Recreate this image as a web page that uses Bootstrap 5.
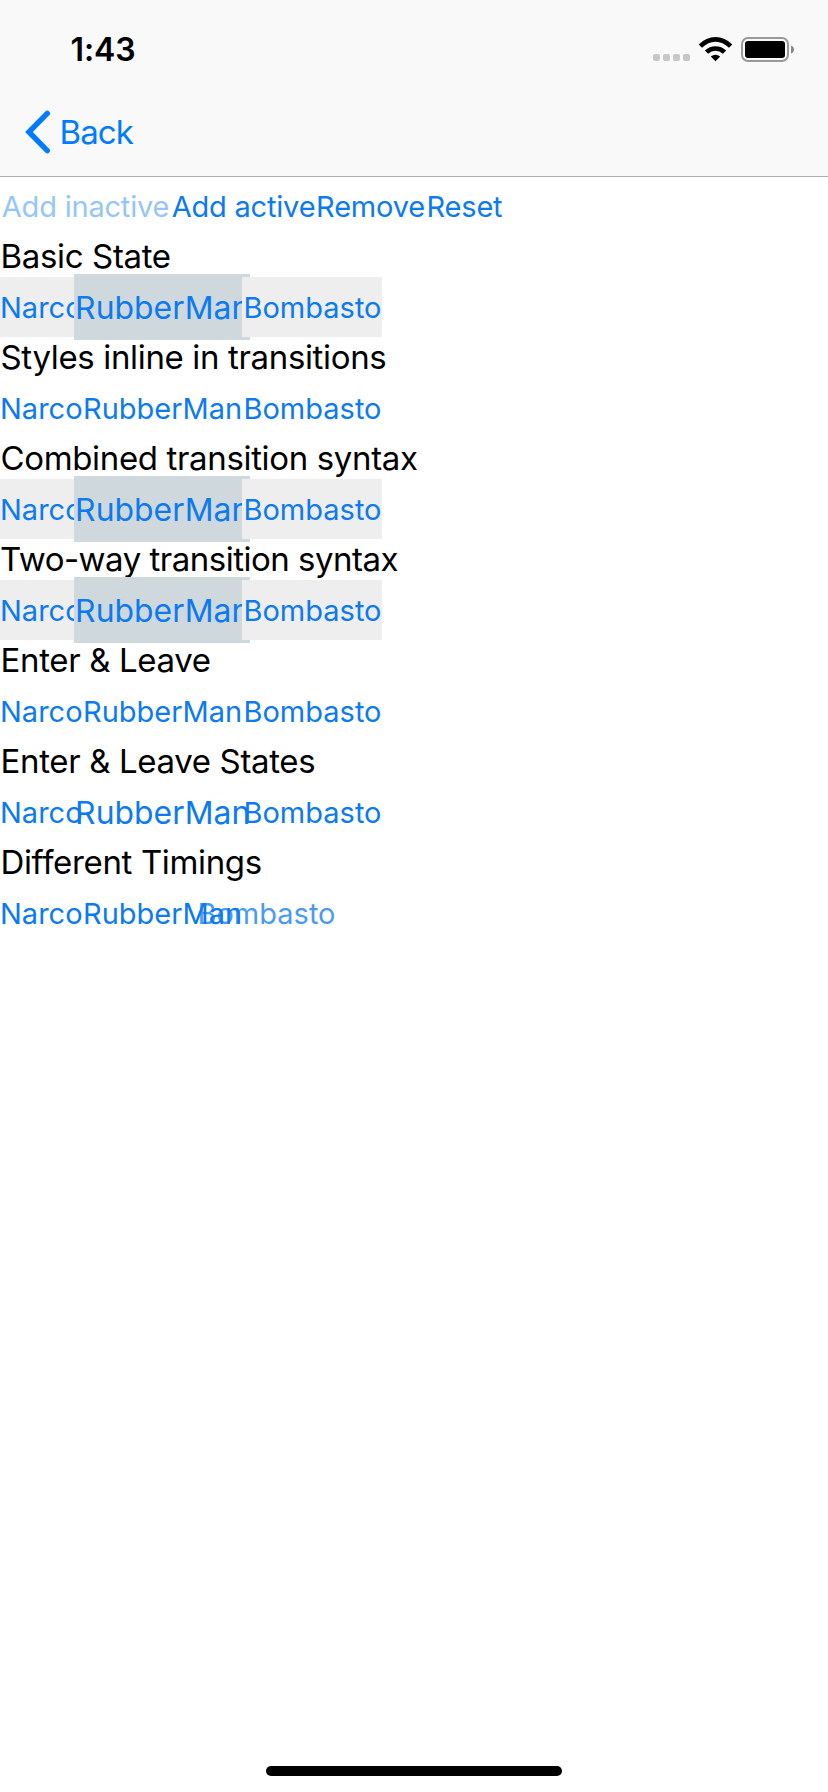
<!DOCTYPE html>
<html lang="en">
<head>
<meta charset="utf-8">
<meta name="viewport" content="width=device-width, initial-scale=1">
<title>Hero animations</title>
<link href="https://cdn.jsdelivr.net/npm/bootstrap@5.3.0/dist/css/bootstrap.min.css" rel="stylesheet">
<style>
  body { font-family: Inter, "Liberation Sans", sans-serif; color: #000; background: #fff; }
  .screen { height: 1792px; overflow: hidden; }
  .top-area { height: 177px; background: #f9f9f9; border-bottom: 1px solid #acacac; }
  .status-bar { height: 88px; padding: 10px 34px 0 70.5px; }
  .clock { font-size: 32px; font-weight: 600; line-height: 1; letter-spacing: -.1px; margin-top: 2px; }
  .back-bar { height: 88px; padding-left: 25px; color: #007aff; }
  .back-label { font-size: 33px; line-height: 1; letter-spacing: -.9px; margin-left: 8.5px; }
  .btn-plain { --bs-btn-color: #0c7af0; --bs-btn-font-size: 29px; --bs-btn-line-height: 1;
    --bs-btn-padding-x: 0; --bs-btn-padding-y: 0; --bs-btn-border-width: 0; --bs-btn-border-radius: 0;
    --bs-btn-disabled-color: #96c6f8; --bs-btn-disabled-opacity: 1;
    height: 60px; white-space: nowrap; }
  .toolbar { height: 59px; }
  .toolbar .btn-plain { height: 59px; letter-spacing: -.2px; }
  .w-add-in { width: 171px; } .w-add-act { width: 145px; } .w-remove { width: 109px; } .w-reset { width: 79px; }
  .section-title { height: 41px; line-height: 41px; font-size: 33px; font-weight: 400; letter-spacing: -.35px; margin: 0; padding-left: .5px; white-space: nowrap; }
  .title-tight { letter-spacing: -.5px; padding-left: 0; }
  .hero-a { width: 82px; } .hero-b { width: 160px; } .hero-c { width: 140px; }
  .filled .btn-plain { background: #eee; }
  .filled .hero-active { background: #cfd8dc; }
  .hero-active { transform: scale(1.1); }
  .heroes .hero-b { padding-left: 1px; }
  .heroes .hero-c { position: relative; padding-left: 1px; }
  .sliding { transform: translateX(-46px); opacity: .75; }
  .home-bar { width: 296px; height: 10px; border-radius: 5px; background: #000; margin-bottom: 16px; }
</style>
</head>
<body>
<div class="screen d-flex flex-column">
  <header class="top-area flex-shrink-0">
    <div class="status-bar d-flex align-items-center justify-content-between">
      <span class="clock">1:43</span>
      <svg width="142" height="26" viewBox="652 36 142 26" aria-hidden="true">
        <g fill="#c7c7c7">
          <rect x="653" y="54" width="7" height="7" rx="2"/><rect x="663" y="54" width="7" height="7" rx="2"/>
          <rect x="673" y="54" width="7" height="7" rx="2"/><rect x="683" y="54" width="7" height="7" rx="2"/>
        </g>
        <g fill="none" stroke="#000" stroke-width="4.6">
          <path d="M700.4 46.2Q707 39.4 715.5 39.4T730.6 46.2"/>
          <path d="M706.5 52.2Q710.3 48.5 715.5 48.5T724.5 52.2"/>
        </g>
        <path d="M710.8 56.6Q715.5 53 720.2 56.6L715.5 61.2Z"/>
        <rect x="742" y="38" width="46" height="23" rx="6" fill="none" stroke="#999" stroke-width="2"/>
        <rect x="745" y="41" width="40" height="17" rx="3"/>
        <path d="M791 45.5Q794 46.5 794 49.5T791 53.5Z" fill="#888"/>
      </svg>
    </div>
    <div class="back-bar d-flex align-items-center">
      <svg width="26" height="44" viewBox="0 0 26 44" aria-hidden="true"><path d="M22.3 3.4 3.9 22 22.3 40.6" fill="none" stroke="#007aff" stroke-width="5.4" stroke-linecap="round" stroke-linejoin="miter"/></svg>
      <span class="back-label">Back</span>
    </div>
  </header>

  <main class="flex-grow-1">
    <div class="toolbar d-flex">
      <button class="btn btn-plain w-add-in" disabled>Add inactive</button>
      <button class="btn btn-plain w-add-act">Add active</button>
      <button class="btn btn-plain w-remove">Remove</button>
      <button class="btn btn-plain w-reset">Reset</button>
    </div>

    <h2 class="section-title">Basic State</h2>
    <div class="heroes filled d-flex">
      <button class="btn btn-plain hero-a">Narco</button>
      <button class="btn btn-plain hero-b hero-active">RubberMan</button>
      <button class="btn btn-plain hero-c">Bombasto</button>
    </div>

    <h2 class="section-title">Styles inline in transitions</h2>
    <div class="heroes d-flex">
      <button class="btn btn-plain hero-a">Narco</button>
      <button class="btn btn-plain hero-b">RubberMan</button>
      <button class="btn btn-plain hero-c">Bombasto</button>
    </div>

    <h2 class="section-title">Combined transition syntax</h2>
    <div class="heroes filled d-flex">
      <button class="btn btn-plain hero-a">Narco</button>
      <button class="btn btn-plain hero-b hero-active">RubberMan</button>
      <button class="btn btn-plain hero-c">Bombasto</button>
    </div>

    <h2 class="section-title title-tight">Two-way transition syntax</h2>
    <div class="heroes filled d-flex">
      <button class="btn btn-plain hero-a">Narco</button>
      <button class="btn btn-plain hero-b hero-active">RubberMan</button>
      <button class="btn btn-plain hero-c">Bombasto</button>
    </div>

    <h2 class="section-title">Enter &amp; Leave</h2>
    <div class="heroes d-flex">
      <button class="btn btn-plain hero-a">Narco</button>
      <button class="btn btn-plain hero-b">RubberMan</button>
      <button class="btn btn-plain hero-c">Bombasto</button>
    </div>

    <h2 class="section-title">Enter &amp; Leave States</h2>
    <div class="heroes d-flex">
      <button class="btn btn-plain hero-a">Narco</button>
      <button class="btn btn-plain hero-b hero-active">RubberMan</button>
      <button class="btn btn-plain hero-c">Bombasto</button>
    </div>

    <h2 class="section-title">Different Timings</h2>
    <div class="heroes d-flex">
      <button class="btn btn-plain hero-a">Narco</button>
      <button class="btn btn-plain hero-b">RubberMan</button>
      <button class="btn btn-plain hero-c sliding">Bombasto</button>
    </div>
  </main>

  <div class="home-bar flex-shrink-0 align-self-center"></div>
</div>
<script src="https://cdn.jsdelivr.net/npm/bootstrap@5.3.0/dist/js/bootstrap.bundle.min.js"></script>
</body>
</html>
